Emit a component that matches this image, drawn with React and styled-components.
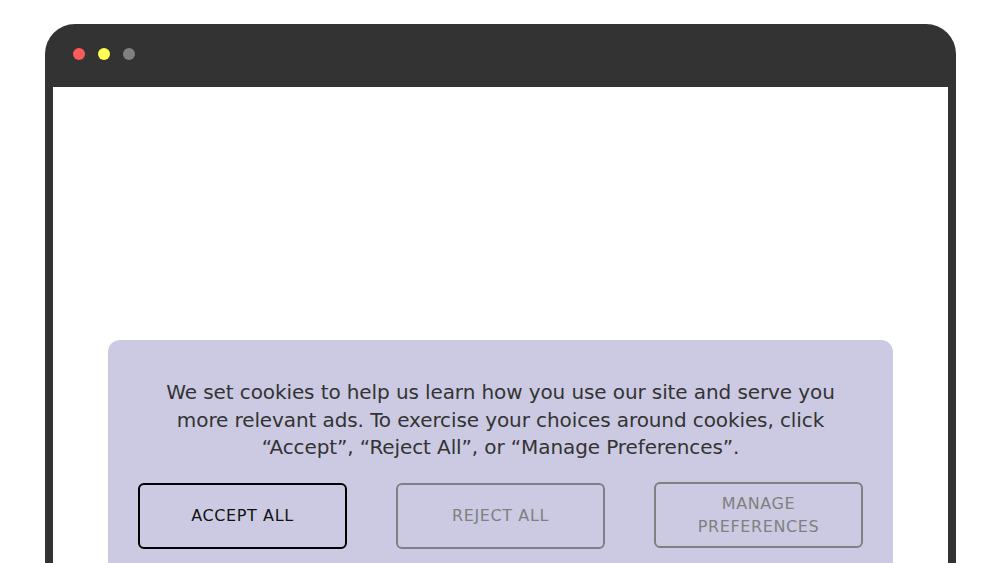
import React from "react";
import styled, { createGlobalStyle } from "styled-components";

const GlobalStyle = createGlobalStyle`
  html, body {
    margin: 0;
    padding: 0;
    background: #ffffff;
    overflow: hidden;
  }
`;

const Page = styled.div`
  width: 1000px;
  height: 563px;
  padding: 24px 44px 0 45px;
  box-sizing: border-box;
  overflow: hidden;
`;

const Frame = styled.div`
  background: #333333;
  border-radius: 30px 30px 0 0;
  padding: 0 8px;
  height: 600px;
  display: flex;
  flex-direction: column;
`;

const TitleBar = styled.div`
  height: 63px;
  display: flex;
  align-items: center;
  gap: 13px;
  padding: 0 0 4px 20px;
  box-sizing: border-box;
`;

const Dot = styled.span`
  width: 12px;
  height: 12px;
  border-radius: 50%;
  background: ${({ color }) => color};
`;

const Screen = styled.div`
  flex: 1;
  background: #ffffff;
  padding: 253px 55px 0 55px;
`;

const Banner = styled.div`
  background: #cccae2;
  border-radius: 12px;
  padding: 39px 30px 40px;
  font-family: "DejaVu Sans", "Open Sans", sans-serif;
  color: #333333;
`;

const Message = styled.p`
  margin: 0 0 21px;
  text-align: center;
  font-size: 20px;
  line-height: 27.5px;
  letter-spacing: -0.1px;
`;

const Actions = styled.div`
  display: grid;
  grid-template-columns: repeat(3, 209px);
  justify-content: space-between;
  align-items: start;
`;

const Button = styled.button`
  height: 66px;
  border: 2px solid ${({ primary }) => (primary ? "#000000" : "#808080")};
  border-radius: 6px;
  background: transparent;
  color: ${({ primary }) => (primary ? "#111111" : "#808080")};
  font-family: "DejaVu Sans", "Open Sans", sans-serif;
  font-size: 16px;
  line-height: 23px;
  text-transform: uppercase;
  letter-spacing: 0.6px;
  margin-top: ${({ raised }) => (raised ? "-1px" : "0")};
  padding: 0 8px;
`;

export default function App() {
  return (
    <>
      <GlobalStyle />
      <Page>
        <Frame>
          <TitleBar>
            <Dot color="#ff5a5a" />
            <Dot color="#ffff55" />
            <Dot color="#808080" />
          </TitleBar>
          <Screen>
            <Banner>
              <Message>
                We set cookies to help us learn how you use our site and serve you
                <br />
                more relevant ads. To exercise your choices around cookies, click
                <br />
                “Accept”, “Reject All”, or “Manage Preferences”.
              </Message>
              <Actions>
                <Button primary>Accept all</Button>
                <Button>Reject all</Button>
                <Button raised>
                  Manage
                  <br />
                  Preferences
                </Button>
              </Actions>
            </Banner>
          </Screen>
        </Frame>
      </Page>
    </>
  );
}
